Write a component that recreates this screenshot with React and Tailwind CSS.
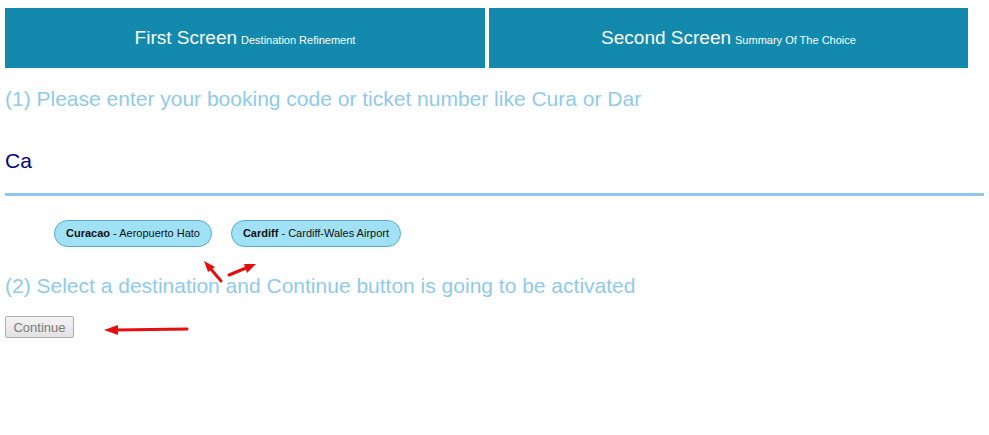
import React, { useState } from 'react';

const Chip = ({ code, name }) => (
  <button className="h-[27px] px-[11px] rounded-full border border-[#5aa8c6] bg-[#a1e1f6] text-[11px] text-[#111] leading-none">
    <b>{code}</b> - {name}
  </button>
);

const Arrows = () => (
  <svg className="absolute inset-0 pointer-events-none" width="989" height="435" viewBox="0 0 989 435">
    <g stroke="#e41010" strokeWidth="3" strokeLinecap="round" fill="#e41010">
      <line x1="221" y1="281" x2="210" y2="268" />
      <polygon points="204,261 215,267 208,272" stroke="none" />
      <line x1="229" y1="275" x2="246" y2="268" />
      <polygon points="256,264 247,273 244,264" stroke="none" />
      <line x1="187" y1="329" x2="116" y2="330" />
      <polygon points="104,330 118,325 118,335" stroke="none" />
    </g>
  </svg>
);

const App = () => {
  const [query, setQuery] = useState('Ca');

  return (
    <div className="relative min-h-[435px] bg-white font-['Liberation_Sans',Arial,sans-serif]">
      <div className="flex gap-1 pt-2 px-[5px]">
        <div className="w-[480px] h-[60px] bg-[#1289ad] text-white flex items-center justify-center">
          <span className="text-[19px]">First Screen</span>
          <span className="text-[11px] ml-1 mt-1">Destination Refinement</span>
        </div>
        <div className="w-[479px] h-[60px] bg-[#1289ad] text-white flex items-center justify-center">
          <span className="text-[19px]">Second Screen</span>
          <span className="text-[11px] ml-1 mt-1">Summary Of The Choice</span>
        </div>
      </div>

      <div className="px-[5px]">
        <h2 className="mt-[19px] text-[21px] leading-[24px] text-[#8fcaee]">
          (1) Please enter your booking code or ticket number like Cura or Dar
        </h2>

        <input
          value={query}
          onChange={(e) => setQuery(e.target.value)}
          className="mt-[18px] block w-full h-[67px] border-b-[3px] border-[#8dc8ec] text-[21px] text-[#000080] outline-none"
        />

        <div className="flex gap-[19px] ml-[49px] mt-[24px]">
          <Chip code="Curacao" name="Aeropuerto Hato" />
          <Chip code="Cardiff" name="Cardiff-Wales Airport" />
        </div>

        <h2 className="mt-[27px] text-[21px] leading-[24px] text-[#8fcaee]">
          (2) Select a destination and Continue button is going to be activated
        </h2>

        <button
          disabled
          className="mt-[18px] h-[22px] w-[69px] border border-[#adadad] rounded-[2px] bg-gradient-to-b from-[#f4f4f4] to-[#e2e2e2] text-[13px] text-[#7a7a7a] leading-none"
        >
          Continue
        </button>
      </div>

      <Arrows />
    </div>
  );
};

export default App;
